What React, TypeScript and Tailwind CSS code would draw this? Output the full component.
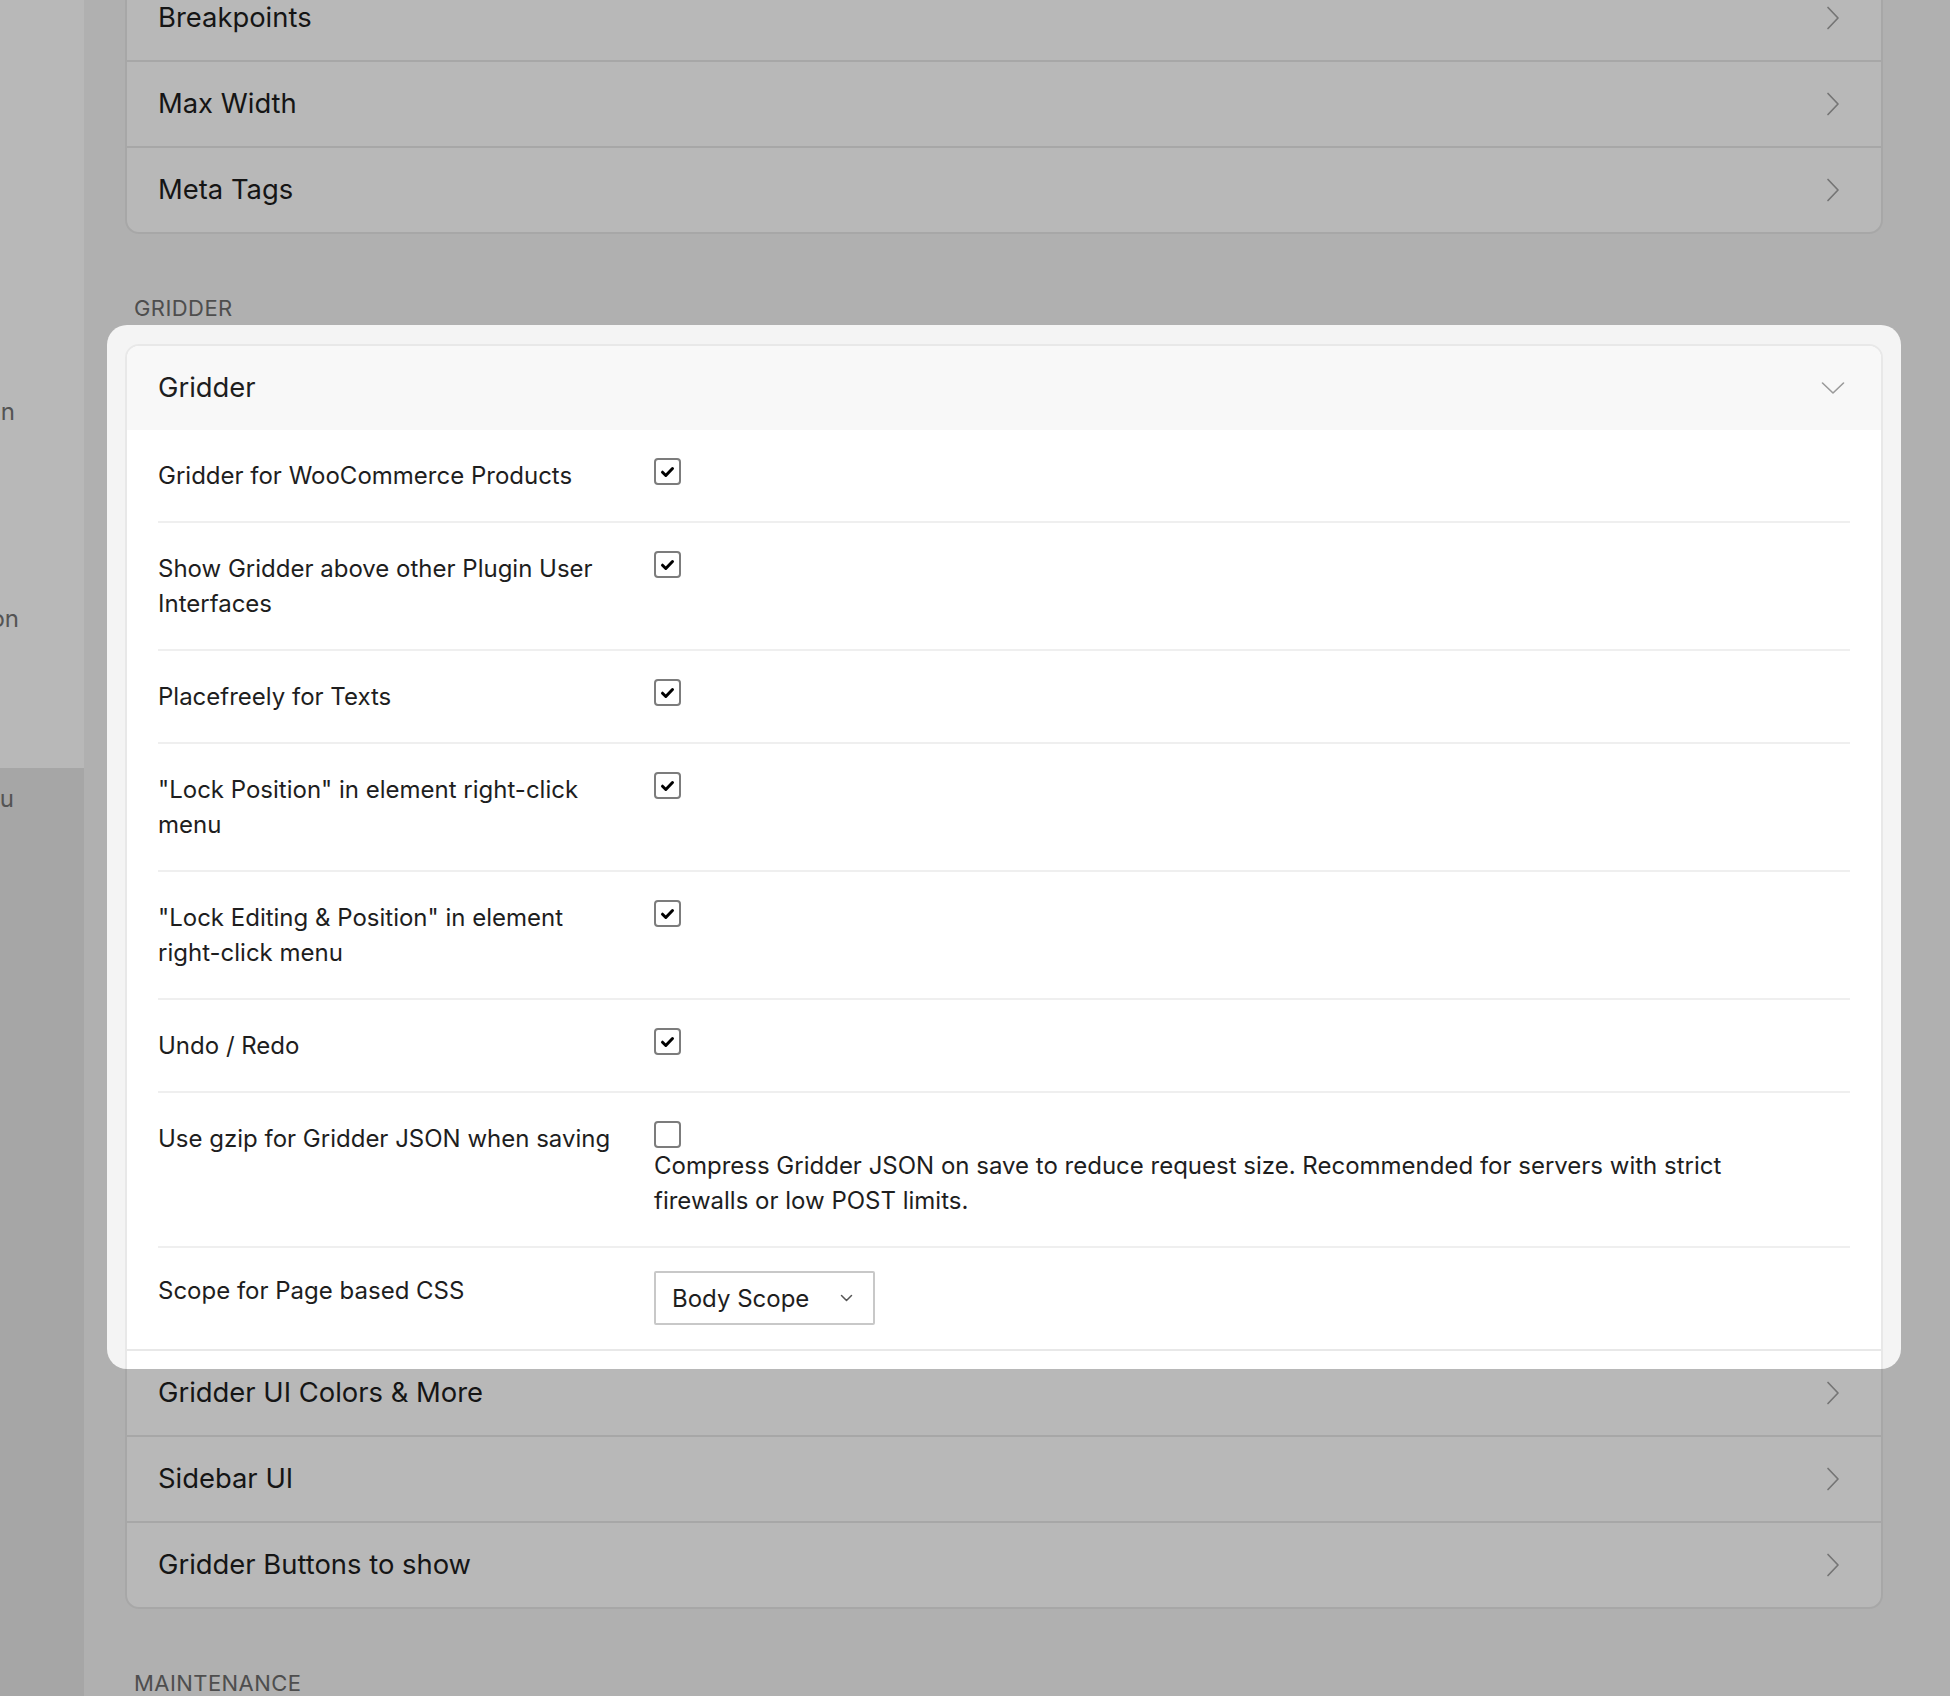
import React from 'react';

type Setting = { label: string; checked: boolean; note?: string };

const settings: Setting[] = [
  { label: 'Gridder for WooCommerce Products', checked: true },
  { label: 'Show Gridder above other Plugin User Interfaces', checked: true },
  { label: 'Placefreely for Texts', checked: true },
  { label: '"Lock Position" in element right-click menu', checked: true },
  { label: '"Lock Editing & Position" in element right-click menu', checked: true },
  { label: 'Undo / Redo', checked: true },
  {
    label: 'Use gzip for Gridder JSON when saving',
    checked: false,
    note: 'Compress Gridder JSON on save to reduce request size. Recommended for servers with strict firewalls or low POST limits.',
  },
];

const ChevronRight = () => (
  <svg width="14" height="24" viewBox="0 0 14 24" fill="none" stroke="#a2a2a2" strokeWidth="1.7" strokeLinecap="round" strokeLinejoin="round">
    <path d="M2 1.5 12 12 2 22.5" />
  </svg>
);

const ChevronDown = () => (
  <svg width="24" height="14" viewBox="0 0 24 14" fill="none" stroke="#9a9a9a" strokeWidth="1.6" strokeLinecap="round" strokeLinejoin="round">
    <path d="M1.5 2 12 12 22.5 2" />
  </svg>
);

const Checkbox = ({ checked }: { checked: boolean }) => (
  <span className="flex h-[27px] w-[27px] items-center justify-center rounded-[4px] border-2 border-[#7c7c7c] bg-white">
    {checked && (
      <svg width="15" height="12" viewBox="0 0 15 12" fill="none">
        <path d="M2.5 6.2 5.8 9.5 12.5 2.5" stroke="#000" strokeWidth="3" strokeLinecap="round" strokeLinejoin="round" />
      </svg>
    )}
  </span>
);

const ListItem = ({ title, first }: { title: string; first?: boolean }) => (
  <div className={`flex items-center justify-between px-[31px] ${first ? 'h-[84px]' : 'h-[86px] border-t-2 border-[#e8e8e8]'}`}>
    <span className="text-[27.4px] text-[#1e1e1e]">{title}</span>
    <span className="flex w-[34px] justify-center">
      <ChevronRight />
    </span>
  </div>
);

const SectionLabel = ({ children }: { children: React.ReactNode }) => (
  <div className="mb-[21px] mt-[59px] pl-[9px] text-[22px] uppercase leading-[30px] tracking-[0.02em] text-[#6c6c6c]">{children}</div>
);

const SidebarItem = ({ text, inset }: { text: string; inset: string }) => (
  <div className={`flex justify-end whitespace-nowrap text-[24px] leading-[35px] text-[#757575] ${inset}`}>{text}</div>
);

export default function App() {
  return (
    <div className="relative flex h-[1696px] w-[1950px] overflow-hidden bg-[#f4f4f4] font-['Inter',sans-serif]">
      {/* left admin menu, scrolled mostly out of view */}
      <aside className="flex w-[84px] shrink-0 flex-col overflow-hidden">
        <div className="flex h-[768px] flex-col gap-[172px] bg-white pt-[394px]">
          <SidebarItem text="Custom Design" inset="pr-[69px]" />
          <SidebarItem text="Animation" inset="pr-[65px]" />
        </div>
        <div className="flex-1 bg-[#e6e6e6] pt-[13px]">
          <SidebarItem text="Sidebar Menu" inset="pr-[70px]" />
        </div>
      </aside>

      <main className="flex-1 pl-[41px] pr-[67px]">
        <div className="-mt-[26px]">
          <div className="rounded-[14px] border-2 border-[#e8e8e8] bg-white">
            <ListItem title="Breakpoints" first />
            <ListItem title="Max Width" />
            <ListItem title="Meta Tags" />
          </div>

          <SectionLabel>Gridder</SectionLabel>

          <div className="rounded-[14px] border-2 border-[#e8e8e8] bg-white">
            <div className="relative">
              {/* spotlight cut-out: everything outside is dimmed */}
              <div className="pointer-events-none absolute -bottom-[20px] -left-[20px] -right-[20px] -top-[21px] z-10 rounded-[20px] shadow-[0_0_0_3000px_rgba(0,0,0,0.28)]" />

              <div className="flex h-[84px] items-center justify-between rounded-t-[12px] bg-[#f8f8f8] px-[31px]">
                <span className="text-[27.4px] text-[#1e1e1e]">Gridder</span>
                <span className="flex w-[34px] justify-center">
                  <ChevronDown />
                </span>
              </div>

              <div className="px-[31px] text-[24px] leading-[35px] text-[#1e1e1e]">
                {settings.map((s) => (
                  <div key={s.label} className="grid grid-cols-[462px_1fr] gap-x-[34px] border-b-2 border-[#efefef] py-[28px]">
                    <div>{s.label}</div>
                    <div className="flex flex-col items-start">
                      <Checkbox checked={s.checked} />
                      {s.note && <p className="max-w-[1110px]">{s.note}</p>}
                    </div>
                  </div>
                ))}
                <div className="grid grid-cols-[462px_1fr] gap-x-[34px] pb-[24px] pt-[23px]">
                  <div className="pt-[2px]">Scope for Page based CSS</div>
                  <div>
                    <div className="flex h-[54px] w-[221px] items-center justify-between rounded-[2px] border-2 border-[#c8c8c8] bg-white pl-[16px] pr-[20px]">
                      <span>Body Scope</span>
                      <svg width="13" height="8" viewBox="0 0 13 8" fill="none" stroke="#555" strokeWidth="1.5" strokeLinecap="round" strokeLinejoin="round">
                        <path d="M1.5 1.5 6.5 6.5 11.5 1.5" />
                      </svg>
                    </div>
                  </div>
                </div>
              </div>
            </div>
            <ListItem title="Gridder UI Colors & More" />
            <ListItem title="Sidebar UI" />
            <ListItem title="Gridder Buttons to show" />
          </div>

          <SectionLabel>Maintenance</SectionLabel>
        </div>
      </main>
    </div>
  );
}
